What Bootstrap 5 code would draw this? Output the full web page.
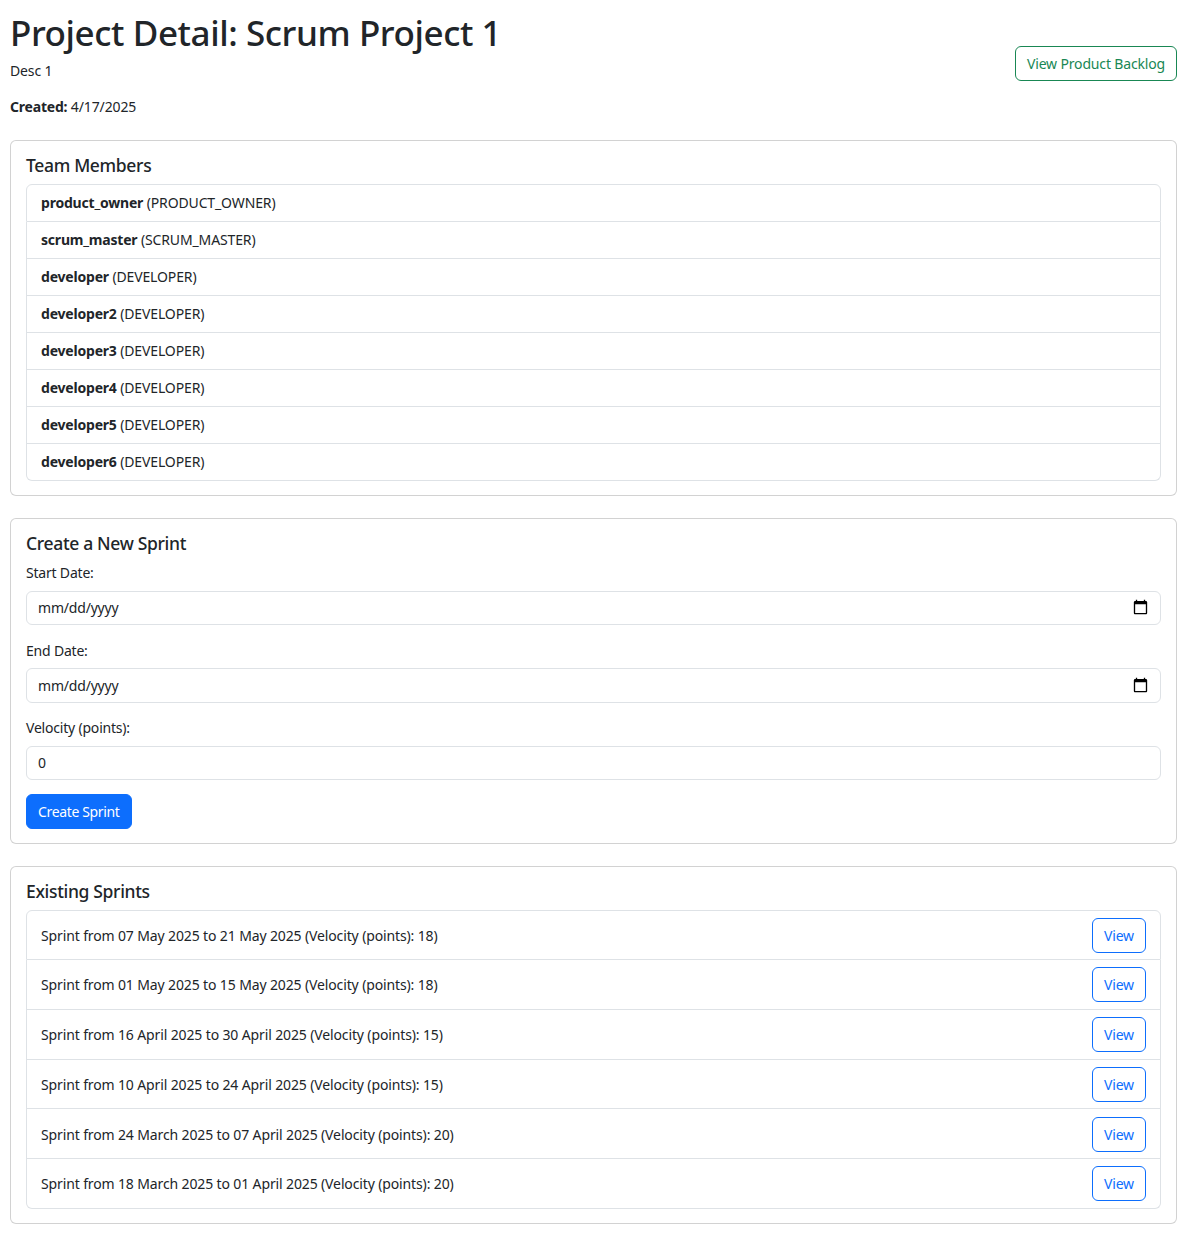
<!DOCTYPE html>
<html lang="en">
<head>
  <meta charset="UTF-8" />
  <meta name="viewport" content="width=device-width, initial-scale=1.0" />
  <title>Project Detail</title>
  <link href="https://cdn.jsdelivr.net/npm/bootstrap@5.3.3/dist/css/bootstrap.min.css" rel="stylesheet">
  <style>
    body { font-family: "Noto Sans", "Open Sans", sans-serif; font-size: 14px; letter-spacing: -0.13px; }
    strong { letter-spacing: -0.2px; }
    .page-wrap { padding: 12px 8px 0 10px; }
    .page-head { margin-bottom: 23px; }
    .page-title { font-size: 35px; font-weight: 500; line-height: 1.2; letter-spacing: -0.42px; margin-bottom: 6px; }
    .desc-line { margin-bottom: 15px; }
    .head-btn { margin-bottom: 2px; letter-spacing: -0.16px; }
    .panel { margin-bottom: 22px; }
    .panel-title { font-size: 17.5px; font-weight: 500; line-height: 1.2; letter-spacing: -0.33px; margin-bottom: 8px; }
    .panel-body { padding: 14px 15px 14px; }
    .member-row { padding: 7px 14px 8px; }
    .sprint-row { padding: 7.3px 14px 6.4px; }
    .form-label { margin-bottom: 7.5px; letter-spacing: -0.2px; }
    .form-control { font-size: 14px; height: 34.5px; padding: 6px 11px; letter-spacing: -0.2px; }
    .form-control::-webkit-calendar-picker-indicator { width: 17px; height: 17px; margin-right: 0; padding: 0; }
    .field { margin-bottom: 14.5px; }
    .field-last { margin-bottom: 13.5px; }
    .btn { font-size: 14px; padding: 6px 11px; }
    .btn-primary { letter-spacing: -0.35px; }
  </style>
</head>
<body>
  <div class="page-wrap">
    <div class="page-head d-flex justify-content-between align-items-center">
      <div>
        <h1 class="page-title">Project Detail: Scrum Project 1</h1>
        <p class="desc-line">Desc 1</p>
        <p class="mb-0"><strong>Created:</strong> 4/17/2025</p>
      </div>
      <a href="#" class="btn btn-outline-success head-btn">View Product Backlog</a>
    </div>

    <div class="card panel">
      <div class="panel-body">
        <h5 class="panel-title">Team Members</h5>
        <ul class="list-group">
          <li class="list-group-item member-row"><strong>product_owner</strong> (PRODUCT_OWNER)</li>
          <li class="list-group-item member-row"><strong>scrum_master</strong> (SCRUM_MASTER)</li>
          <li class="list-group-item member-row"><strong>developer</strong> (DEVELOPER)</li>
          <li class="list-group-item member-row"><strong>developer2</strong> (DEVELOPER)</li>
          <li class="list-group-item member-row"><strong>developer3</strong> (DEVELOPER)</li>
          <li class="list-group-item member-row"><strong>developer4</strong> (DEVELOPER)</li>
          <li class="list-group-item member-row"><strong>developer5</strong> (DEVELOPER)</li>
          <li class="list-group-item member-row"><strong>developer6</strong> (DEVELOPER)</li>
        </ul>
      </div>
    </div>

    <div class="card panel">
      <div class="panel-body">
        <h5 class="panel-title">Create a New Sprint</h5>
        <form>
          <div class="field">
            <label class="form-label" for="startDate">Start Date:</label>
            <input type="date" class="form-control" id="startDate">
          </div>
          <div class="field">
            <label class="form-label" for="endDate">End Date:</label>
            <input type="date" class="form-control" id="endDate">
          </div>
          <div class="field-last">
            <label class="form-label" for="velocity">Velocity (points):</label>
            <input type="number" class="form-control" id="velocity" value="0">
          </div>
          <button type="button" class="btn btn-primary">Create Sprint</button>
        </form>
      </div>
    </div>

    <div class="card">
      <div class="panel-body">
        <h5 class="panel-title">Existing Sprints</h5>
        <ul class="list-group">
          <li class="list-group-item sprint-row d-flex justify-content-between align-items-center">Sprint from 07 May 2025 to 21 May 2025 (Velocity (points): 18)<a href="#" class="btn btn-outline-primary">View</a></li>
          <li class="list-group-item sprint-row d-flex justify-content-between align-items-center">Sprint from 01 May 2025 to 15 May 2025 (Velocity (points): 18)<a href="#" class="btn btn-outline-primary">View</a></li>
          <li class="list-group-item sprint-row d-flex justify-content-between align-items-center">Sprint from 16 April 2025 to 30 April 2025 (Velocity (points): 15)<a href="#" class="btn btn-outline-primary">View</a></li>
          <li class="list-group-item sprint-row d-flex justify-content-between align-items-center">Sprint from 10 April 2025 to 24 April 2025 (Velocity (points): 15)<a href="#" class="btn btn-outline-primary">View</a></li>
          <li class="list-group-item sprint-row d-flex justify-content-between align-items-center">Sprint from 24 March 2025 to 07 April 2025 (Velocity (points): 20)<a href="#" class="btn btn-outline-primary">View</a></li>
          <li class="list-group-item sprint-row d-flex justify-content-between align-items-center">Sprint from 18 March 2025 to 01 April 2025 (Velocity (points): 20)<a href="#" class="btn btn-outline-primary">View</a></li>
        </ul>
      </div>
    </div>
  </div>
  <script src="https://cdn.jsdelivr.net/npm/bootstrap@5.3.3/dist/js/bootstrap.bundle.min.js"></script>
</body>
</html>
